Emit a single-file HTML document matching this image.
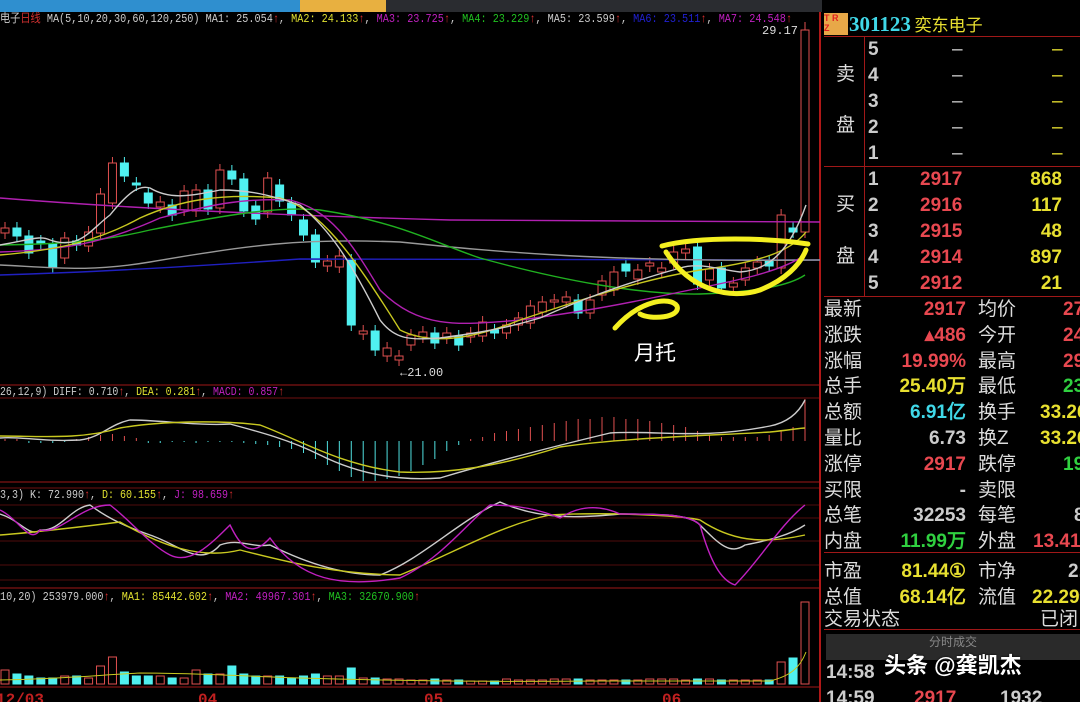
<!DOCTYPE html><html><head><meta charset="utf-8"><style>
body{margin:0;background:#000;width:1080px;height:702px;overflow:hidden;position:relative;font-family:"Liberation Sans","Noto Sans CJK SC",sans-serif}
svg{position:absolute;left:0;top:0}
.rp{position:absolute;left:822px;top:12px;width:258px;height:690px;color:#ddd;overflow:hidden}
.r{position:absolute;font-size:19px;line-height:22px;white-space:nowrap}
.n{font-weight:bold;font-family:"Liberation Sans",sans-serif;font-size:19px}
</style></head><body>
<svg width="822" height="702" id="s" font-family="Liberation Mono,Noto Sans CJK SC,monospace" font-size="12">
<rect x="0" y="0" width="1080" height="12" fill="#2a2c30"/>
<rect x="0" y="0" width="300" height="12" fill="#2f8fcf"/>
<rect x="300" y="0" width="86" height="12" fill="#e8b040"/>
<text x="0" y="22" fill="#ccc" textLength="792" lengthAdjust="spacingAndGlyphs">电子<tspan fill="#d03030">日线</tspan> MA(5,10,20,30,60,120,250) MA1: 25.054<tspan fill="#e03030">↑</tspan>,<tspan fill="#e0e030"> MA2: 24.133</tspan><tspan fill="#e03030">↑</tspan>,<tspan fill="#c020c0"> MA3: 23.725</tspan><tspan fill="#e03030">↑</tspan>,<tspan fill="#20c020"> MA4: 23.229</tspan><tspan fill="#e03030">↑</tspan>, MA5: 23.599<tspan fill="#e03030">↑</tspan>,<tspan fill="#2020d0"> MA6: 23.511</tspan><tspan fill="#e03030">↑</tspan>,<tspan fill="#c020c0"> MA7: 24.548</tspan><tspan fill="#e03030">↑</tspan></text>
<text x="762" y="34" fill="#ddd">29.17</text><text x="400" y="376" fill="#ddd">←21.00</text>
<line x1="0" y1="385" x2="820" y2="385" stroke="#a01818"/>
<line x1="0" y1="398" x2="820" y2="398" stroke="#701010"/>
<text x="0" y="395" fill="#ccc" textLength="284" lengthAdjust="spacingAndGlyphs">26,12,9) DIFF: 0.710<tspan fill="#e03030">↑</tspan>,<tspan fill="#e0e030"> DEA: 0.281</tspan><tspan fill="#e03030">↑</tspan>,<tspan fill="#c020c0"> MACD: 0.857</tspan><tspan fill="#e03030">↑</tspan></text>
<line x1="0" y1="482" x2="820" y2="482" stroke="#a01818"/>
<line x1="0" y1="488" x2="820" y2="488" stroke="#701010"/>
<text x="0" y="498" fill="#ccc" textLength="234" lengthAdjust="spacingAndGlyphs">3,3) K: 72.990<tspan fill="#e03030">↑</tspan>,<tspan fill="#e0e030"> D: 60.155</tspan><tspan fill="#e03030">↑</tspan>,<tspan fill="#c020c0"> J: 98.659</tspan><tspan fill="#e03030">↑</tspan></text>
<g stroke="#500c0c"><line x1="0" y1="505" x2="820" y2="505"/><line x1="0" y1="518" x2="820" y2="518"/><line x1="0" y1="541" x2="820" y2="541"/><line x1="0" y1="565" x2="820" y2="565"/><line x1="0" y1="580" x2="820" y2="580"/></g>
<line x1="0" y1="588" x2="820" y2="588" stroke="#a01818"/>
<text x="0" y="600" fill="#ccc" textLength="420" lengthAdjust="spacingAndGlyphs">10,20) 253979.000<tspan fill="#e03030">↑</tspan>,<tspan fill="#e0e030"> MA1: 85442.602</tspan><tspan fill="#e03030">↑</tspan>,<tspan fill="#c020c0"> MA2: 49967.301</tspan><tspan fill="#e03030">↑</tspan>,<tspan fill="#20c020"> MA3: 32670.900</tspan><tspan fill="#e03030">↑</tspan></text>
<line x1="0" y1="687" x2="820" y2="687" stroke="#a01818"/>
<g fill="#c02020" font-size="16" font-weight="bold"><text x="-4" y="704">12/03</text><text x="198" y="704">04</text><text x="424" y="704">05</text><text x="662" y="704">06</text></g>
<line x1="820" y1="12" x2="820" y2="702" stroke="#b01818" stroke-width="2"/>
<g id="c"></g>
<g fill="none" stroke-width="1.4">
<path d="M0,198 C150,210 300,216 450,220 L820,222" stroke="#b020b0"/>
<path d="M0,275 C100,272 200,266 300,259 L820,260" stroke="#2020c0"/>
<path d="M0,265 C60,268 90,272 150,262 C250,245 300,238 400,242 C500,252 600,262 820,260" stroke="#999"/>
<path d="M0,245 C60,244 100,242 150,230 C230,214 280,206 320,210 C400,222 440,245 480,258 C560,280 640,295 700,294 C760,292 790,285 805,275" stroke="#20b020"/>
<path d="M0,252 C60,250 100,245 160,218 C210,205 240,198 290,200 C330,210 350,240 380,290 C420,330 460,325 520,320 C580,312 620,305 680,292 C740,280 780,272 805,255" stroke="#b020b0"/>
<path d="M0,255 C60,250 100,240 140,218 C180,200 220,193 280,198 C320,210 350,250 400,330 C430,345 470,340 520,320 C580,300 640,280 700,270 C760,262 790,252 806,232" stroke="#c8c820"/>
<path d="M0,245 C30,240 40,235 50,240 C80,250 90,230 110,215 C130,190 140,185 150,188 C170,200 190,196 220,190 C250,190 270,195 300,205 C330,230 350,260 380,320 C395,340 410,340 440,338 C470,334 500,330 540,318 C580,300 620,285 680,268 C700,262 720,270 740,272 C770,270 790,250 806,205" stroke="#ccc"/>
<path d="M0,438 C20,436 40,442 80,440 C100,438 110,424 130,420 C160,420 200,426 230,424 C260,432 290,440 320,455 C360,475 400,481 440,478 C500,460 560,445 610,433 C660,430 700,440 770,426 C790,422 800,410 805,400" stroke="#ccc"/>
<path d="M0,436 C40,436 80,440 120,428 C160,421 220,420 260,425 C300,440 340,465 400,472 C450,474 500,466 560,447 C620,438 700,436 770,432 C790,430 800,428 805,428" stroke="#c8c820"/>
<path d="M0,514 C20,520 30,538 40,530 C60,532 70,508 90,505 C110,520 130,528 150,535 C180,545 200,568 220,545 C240,538 250,548 270,545 C300,560 340,575 380,575 C420,560 460,520 500,502 C540,520 580,518 620,514 C660,514 690,514 700,525 C720,545 730,555 745,545 C770,540 790,535 805,525" stroke="#ccc"/>
<path d="M0,535 C40,532 80,527 120,522 C160,545 200,560 240,550 C280,560 330,574 400,575 C450,555 500,525 550,515 C600,512 680,515 700,520 C730,540 760,545 805,535" stroke="#c8c820"/>
<path d="M0,510 C20,520 30,545 40,530 C60,535 80,505 110,505 C130,520 150,545 170,555 C190,565 210,545 230,525 C240,545 250,560 270,538 C300,580 340,588 400,578 C440,560 470,520 490,505 C520,505 540,510 560,518 C580,505 600,505 620,514 C660,514 690,514 700,525 C710,560 720,580 735,585 C760,560 780,525 805,505" stroke="#c020c0"/>
</g>
<g fill="none" stroke="#f4f020" stroke-width="5" stroke-linecap="round">
<path d="M662,246 C700,236 770,238 808,244"/>
<path d="M666,252 C690,290 730,300 760,290 C785,280 800,265 806,250"/>
<path d="M615,328 C640,300 670,296 677,306 C681,318 650,320 640,314"/>
</g>
<text x="634" y="360" fill="#fff" font-size="21" font-family="Noto Sans CJK SC,sans-serif">月托</text>
</svg>
<div class="rp">
<div style="position:absolute;left:2px;top:1px;width:24px;height:22px;background:#e8a848;color:#e02020;font-size:9px;line-height:10px;font-weight:bold">T R<br>Z</div>
<div class="r n" style="left:27px;top:1px;color:#40d8e8;font-family:'Liberation Serif',serif;font-size:21px">301123<span style="color:#e8e030;font-family:'Noto Sans CJK SC';font-size:17px;font-weight:normal"> 奕东电子</span></div>
<div style="position:absolute;left:2px;top:24px;width:256px;height:0;border-top:1px solid #a01818"></div>
<div style="position:absolute;left:42px;top:24px;height:260px;border-left:1px solid #a01818"></div>
<div style="position:absolute;left:2px;top:154px;width:256px;border-top:1px solid #a01818"></div>
<div style="position:absolute;left:2px;top:284px;width:256px;border-top:1px solid #a01818"></div>
<div class="r" style="left:14px;top:52px">卖</div><div class="r" style="left:14px;top:103px">盘</div>
<div class="r" style="left:14px;top:182px">买</div><div class="r" style="left:14px;top:234px">盘</div>
<div id="ob"></div>
<div id="st"></div>
<div style="position:absolute;left:2px;top:540px;width:256px;border-top:1px solid #a01818"></div>
<div style="position:absolute;left:2px;top:617px;width:256px;border-top:1px solid #a01818"></div>
<div style="position:absolute;left:4px;top:622px;width:254px;height:26px;background:#2a2a2a;color:#888;font-size:12px;text-align:center;line-height:16px">分时成交</div>
<div class="r n" style="left:4px;top:650px;color:#ccc">14:58</div>
<div class="r n" style="left:4px;top:676px;color:#ccc">14:59</div><div class="r n" style="left:92px;top:676px;color:#e84850">2917</div><div class="r n" style="left:178px;top:676px;color:#ccc">1932</div>
<div class="r" style="left:62px;top:640px;color:#fff;font-size:22px;font-weight:bold;line-height:28px;text-shadow:0 0 2px #000">头条 @龚凯杰</div>
</div>
<script>
var C=[['r',228,233],['c',228,236],['c',236,253],['c',241,244],['c',244,267],['r',238,258],['c',241,245],['r',232,246],['r',194,233],['r',163,203],['c',163,176],['c',183,185],['c',193,203],['r',202,207],['c',205,215],['r',191,210],['r',190,211],['c',190,209],['r',170,208],['c',171,179],['c',179,211],['c',206,219],['r',178,212],['c',185,201],['c',203,215],['c',220,235],['c',235,262],['r',261,266],['r',256,267],['c',260,325],['r',331,334],['c',331,350],['r',348,356],['r',356,360],['r',335,345],
['r',332,337],['c',333,343],['r',333,338],['c',336,345],['r',333,337],['r',322,336],['c',330,333],['r',325,333],['r',318,325],['r',306,323],['r',302,312],['r',300,302],['r',297,302],['c',300,313],['r',300,313],['r',281,295],['r',272,290],['c',264,271],['r',270,279],['r',263,266],['r',268,272],['r',252,263],['r',249,253],['c',247,284],['r',269,280],['c',268,288],['r',283,287],['r',268,280],['r',262,268],['c',261,266],['r',215,268],['c',228,232],['r',30,232]];
var h='',N=C.length,st=800/(N-1);
var vol=[14,10,8,6,6,8,8,6,18,27,12,8,8,8,6,6,14,10,10,18,10,8,8,8,6,8,10,8,8,16,6,6,5,5,4,4,5,4,4,3,3,3,5,4,4,4,5,5,5,4,4,4,4,4,5,5,5,4,5,5,4,4,4,4,4,22,26,82];
for(var i=0;i<N;i++){var d=C[i],x=5+i*st,col=d[0]=='r'?'#e05050':'#50f0f0',t=d[1],b=Math.max(d[2],t+2);
h+='<line x1="'+x+'" y1="'+(i==N-1?22:t-6)+'" x2="'+x+'" y2="'+(b+6)+'" stroke="'+col+'" stroke-width="1"/>';
h+='<rect x="'+(x-4)+'" y="'+t+'" width="8" height="'+(b-t)+'" fill="'+(d[0]=='r'?'#000':col)+'" stroke="'+col+'"/>';
var v=vol[i]||4;h+='<rect x="'+(x-4)+'" y="'+(684-v)+'" width="8" height="'+v+'" fill="'+(d[0]=='r'?'#000':col)+'" stroke="'+col+'"/>';
var m=[2,2,-2,-2,-2,-1,2,4,6,7,5,3,-2,-2,-1,-1,-2,-1,-1,-1,-2,-3,-4,-6,-8,-12,-18,-24,-30,-36,-40,-40,-38,-35,-30,-24,-18,-10,-4,2,4,8,10,12,14,16,18,20,22,22,24,24,22,22,20,18,16,14,10,6,4,4,4,4,6,10,14,42][i]||0;
h+='<line x1="'+x+'" y1="441" x2="'+x+'" y2="'+(441-m)+'" stroke="'+(m>=0?'#e05050':'#50e0e0')+'"/>';}
h+='<path d="M0,680 C60,679 100,675 140,673 C200,673 260,677 300,678 C400,681 500,682 600,681 L770,681 C790,676 800,668 806,652" stroke="#c8c820" fill="none"/>';
document.getElementById('c').innerHTML=h;
var o='',sell=[5,4,3,2,1],bp=['2917','2916','2915','2914','2912'],bv=['868','117','48','897','21'];
for(var k=0;k<5;k++){var y=27+k*26;o+='<div class="r n" style="left:46px;top:'+y+'px;color:#ccc">'+sell[k]+'</div><div class="r" style="left:130px;top:'+y+'px;color:#ccc">–</div><div class="r" style="left:230px;top:'+y+'px;color:#e8e030">–</div>';
y=157+k*26;o+='<div class="r n" style="left:46px;top:'+y+'px;color:#ccc">'+(k+1)+'</div><div class="r n" style="left:98px;top:'+y+'px;color:#e84850">'+bp[k]+'</div><div class="r n" style="right:18px;top:'+y+'px;color:#e8e030">'+bv[k]+'</div>';}
document.getElementById('ob').innerHTML=o;
var S=[['最新','2917','#e84850','均价','2726','#e84850',241],['涨跌','▴486','#e84850','今开','2450','#e84850',241],['涨幅','19.99%','#e84850','最高','2917','#e84850',241],['总手','25.40万','#e8e030','最低','2374','#30d040',241],['总额','6.91亿','#40d8e8','换手','33.26%','#e8e030',218],['量比','6.73','#ccc','换Z','33.26%','#e8e030',218],['涨停','2917','#e84850','跌停','1945','#30d040',241],['买限','-','#ccc','卖限','','',241],['总笔','32253','#ccc','每笔','8','#ccc',252],['内盘','11.99万','#30d040','外盘','13.41万','#e84850',211],['市盈','81.44①','#e8e030','市净','2.89','#ccc',246],['总值','68.14亿','#e8e030','流值','22.29亿','#e8e030',210]];
var p='';for(var k=0;k<S.length;k++){var y=287+k*25.8+(k>9?4:0),s=S[k];
p+='<div class="r" style="left:2px;top:'+y+'px">'+s[0]+'</div><div class="r n" style="right:114px;top:'+y+'px;color:'+s[2]+'">'+s[1]+'</div><div class="r" style="left:156px;top:'+y+'px">'+s[3]+'</div><div class="r n" style="left:'+s[6]+'px;top:'+y+'px;color:'+s[5]+'">'+s[4]+'</div>';}
p+='<div class="r" style="left:2px;top:597px">交易状态</div><div class="r" style="left:218px;top:597px">已闭</div>';
document.getElementById('st').innerHTML=p;
</script>
</body></html>
